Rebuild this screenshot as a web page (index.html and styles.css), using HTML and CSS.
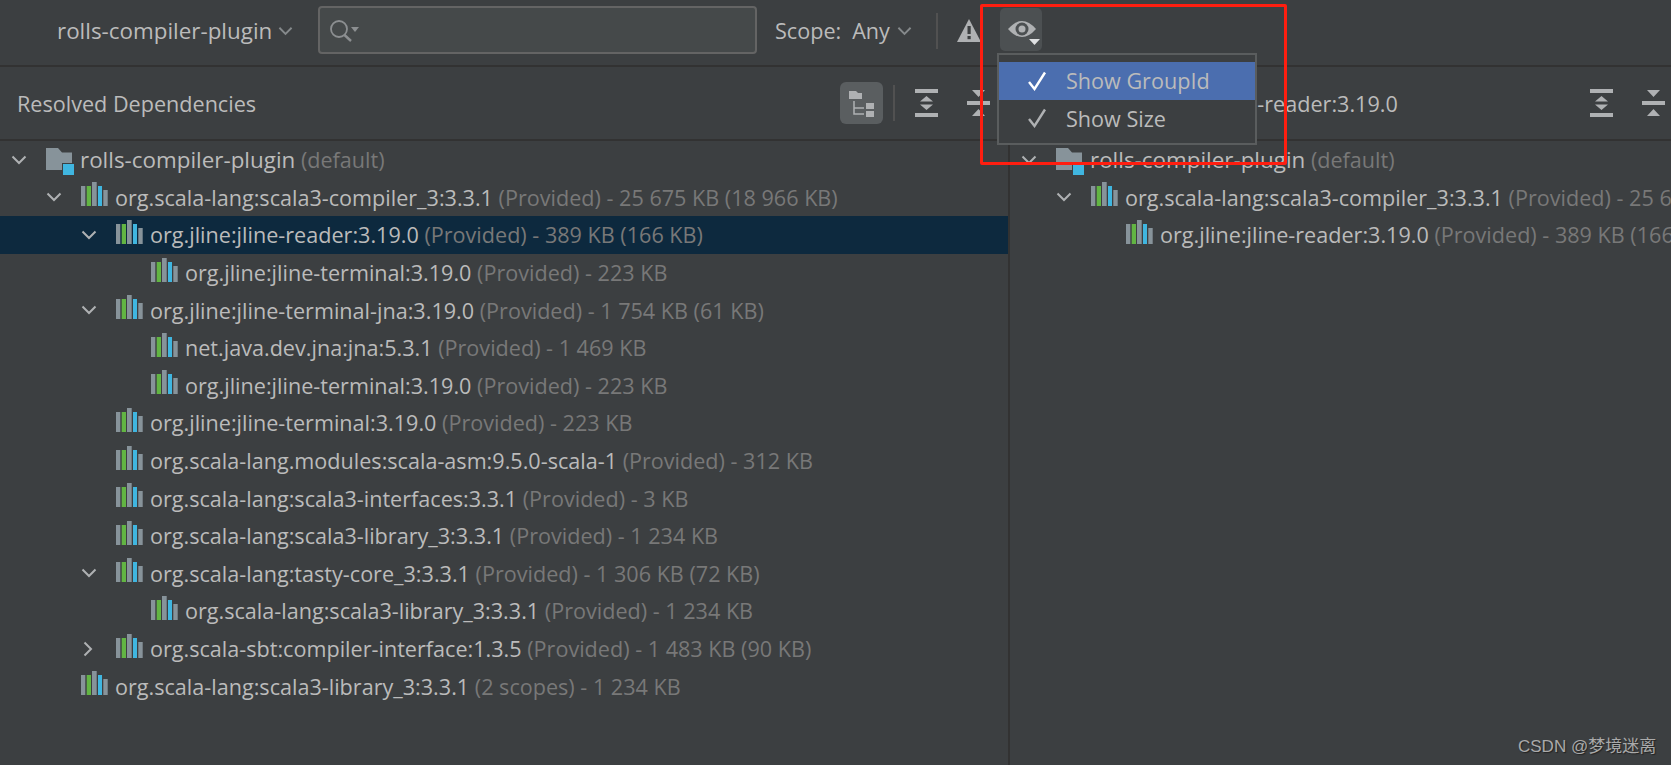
FILE: index.html
```html
<!DOCTYPE html>
<html lang="en">

<head>
    <meta charset="utf-8">
    <title>Resolved Dependencies</title>
    <link rel="stylesheet" href="styles.css">
</head>

<body>
    <!-- icons used more than once -->
    <svg class="defs" width="0" height="0">
        <symbol id="i-down" viewBox="0 0 16 10">
            <path d="M1.5 1.5 L8 8 L14.5 1.5" fill="none" stroke="currentColor" stroke-width="2" />
        </symbol>
        <symbol id="i-right" viewBox="0 0 10 16">
            <path d="M1.5 1.5 L8 8 L1.5 14.5" fill="none" stroke="currentColor" stroke-width="2" />
        </symbol>
        <symbol id="i-lib" viewBox="0 0 27 24">
            <rect x="0" y="4" width="4.3" height="20" fill="#87939a" />
            <rect x="5.700" y="4" width="4.300" height="20" fill="#62b543" />
            <rect x="11" y="0" width="4.700" height="24" fill="#87939a" />
            <rect x="17" y="4" width="4" height="20" fill="#40b6e0" />
            <rect x="22.300" y="8" width="4.400" height="16" fill="#87939a" />
        </symbol>
        <symbol id="i-folder" viewBox="0 0 28 27">
            <path d="M0 0 H12 L16 4.500 H26 V22 H0 Z" fill="#87939a" />
            <rect x="16" y="15" width="12" height="12" fill="#3c3f41" />
            <rect x="17" y="16" width="11" height="11" fill="#40b6e0" />
        </symbol>
        <symbol id="i-expand" viewBox="0 0 23 28">
            <rect x="0" y="0" width="23" height="4" fill="#afb1b3" />
            <rect x="0" y="24" width="23" height="4" fill="#afb1b3" />
            <path d="M11.500 7 L18 12.500 H5 Z M5 15.500 H18 L11.500 21 Z" fill="#afb1b3" />
        </symbol>
        <symbol id="i-collapse" viewBox="0 0 23 28">
            <rect x="0" y="12" width="23" height="4" fill="#afb1b3" />
            <path d="M5 1 H18 L11.500 8 Z M11.500 20 L18 27 H5 Z" fill="#afb1b3" />
        </symbol>
        <symbol id="i-check" viewBox="0 0 20 20">
            <path d="M2 11 L7.500 18 L18 1.500" fill="none" stroke="currentColor" stroke-width="2.400" />
        </symbol>
    </svg>

    <div class="toolbar">
        <span class="tb-module">rolls-compiler-plugin</span>
        <svg class="tb-chevron" width="15" height="10"><use href="#i-down" /></svg>

        <div class="search">
            <svg width="32" height="28" viewBox="0 0 32 28">
                <circle cx="10" cy="13" r="8" fill="none" stroke="#8c8f91" stroke-width="1.800" />
                <path d="M15.500 19 L22 25" stroke="#8c8f91" stroke-width="2.400" />
                <path d="M22 11 H30 L26 16 Z" fill="#8c8f91" />
            </svg>
        </div>

        <span class="scope-label">Scope:</span>
        <span class="scope-value">Any</span>
        <svg class="tb-chevron" width="15" height="10"><use href="#i-down" /></svg>
        <span class="tb-sep"></span>

        <svg class="warn" width="24" height="23" viewBox="0 0 24 23">
            <path d="M12 0 L24 23 H0 Z" fill="#afb1b3" />
            <rect x="10.500" y="7" width="3.200" height="8" fill="#3c3f41" />
            <rect x="10.500" y="17" width="3.200" height="3.200" fill="#3c3f41" />
        </svg>

        <div class="eye-btn">
            <svg width="36" height="36" viewBox="0 0 36 36">
                <path d="M3 15 Q17 -1 31 15 Q17 31 3 15 Z" fill="#afb1b3" />
                <circle cx="17" cy="15" r="6.500" fill="#4c5052" />
                <circle cx="17" cy="15" r="3.500" fill="#afb1b3" />
                <path d="M24 25 H35 L29.500 31 Z" fill="#dfe1e3" />
            </svg>
        </div>
    </div>

    <div class="main">
        <div class="panel panel-left">
            <div class="panel-head">
                <span class="panel-title">Resolved Dependencies</span>
                <div class="toggle-btn">
                    <svg width="30" height="30" viewBox="0 0 30 30">
                        <path d="M2 3 H9 L11 5 H15 V11 H2 Z" fill="#afb1b3" />
                        <path d="M7 13 V26 H17 M7 20 H17" fill="none" stroke="#afb1b3" stroke-width="1.500" />
                        <rect x="19" y="15" width="8" height="6" fill="#afb1b3" />
                        <rect x="19" y="23" width="8" height="6" fill="#afb1b3" />
                    </svg>
                </div>
                <span class="head-sep"></span>
                <svg class="head-expand" width="23" height="28"><use href="#i-expand" /></svg>
                <svg class="head-collapse" width="23" height="28"><use href="#i-collapse" /></svg>
            </div>

            <div class="tree">
                <div class="row lvl-0">
                    <span class="arrow"><svg width="16" height="10"><use href="#i-down" /></svg></span>
                    <svg class="icon" width="28" height="27"><use href="#i-folder" /></svg>
                    <span class="label"><span class="name">rolls-compiler-plugin</span> <span class="info">(default)</span></span>
                </div>
                <div class="row lvl-1">
                    <span class="arrow"><svg width="16" height="10"><use href="#i-down" /></svg></span>
                    <svg class="icon" width="27" height="24"><use href="#i-lib" /></svg>
                    <span class="label"><span class="name">org.scala-lang:scala3-compiler_3:3.3.1</span> <span class="info">(Provided) - 25 675 KB (18 966 KB)</span></span>
                </div>
                <div class="row lvl-2 selected">
                    <span class="arrow"><svg width="16" height="10"><use href="#i-down" /></svg></span>
                    <svg class="icon" width="27" height="24"><use href="#i-lib" /></svg>
                    <span class="label"><span class="name">org.jline:jline-reader:3.19.0</span> <span class="info">(Provided) - 389 KB (166 KB)</span></span>
                </div>
                <div class="row lvl-3">
                    <span class="arrow"></span>
                    <svg class="icon" width="27" height="24"><use href="#i-lib" /></svg>
                    <span class="label"><span class="name">org.jline:jline-terminal:3.19.0</span> <span class="info">(Provided) - 223 KB</span></span>
                </div>
                <div class="row lvl-2">
                    <span class="arrow"><svg width="16" height="10"><use href="#i-down" /></svg></span>
                    <svg class="icon" width="27" height="24"><use href="#i-lib" /></svg>
                    <span class="label"><span class="name">org.jline:jline-terminal-jna:3.19.0</span> <span class="info">(Provided) - 1 754 KB (61 KB)</span></span>
                </div>
                <div class="row lvl-3">
                    <span class="arrow"></span>
                    <svg class="icon" width="27" height="24"><use href="#i-lib" /></svg>
                    <span class="label"><span class="name">net.java.dev.jna:jna:5.3.1</span> <span class="info">(Provided) - 1 469 KB</span></span>
                </div>
                <div class="row lvl-3">
                    <span class="arrow"></span>
                    <svg class="icon" width="27" height="24"><use href="#i-lib" /></svg>
                    <span class="label"><span class="name">org.jline:jline-terminal:3.19.0</span> <span class="info">(Provided) - 223 KB</span></span>
                </div>
                <div class="row lvl-2">
                    <span class="arrow"></span>
                    <svg class="icon" width="27" height="24"><use href="#i-lib" /></svg>
                    <span class="label"><span class="name">org.jline:jline-terminal:3.19.0</span> <span class="info">(Provided) - 223 KB</span></span>
                </div>
                <div class="row lvl-2">
                    <span class="arrow"></span>
                    <svg class="icon" width="27" height="24"><use href="#i-lib" /></svg>
                    <span class="label"><span class="name">org.scala-lang.modules:scala-asm:9.5.0-scala-1</span> <span class="info">(Provided) - 312 KB</span></span>
                </div>
                <div class="row lvl-2">
                    <span class="arrow"></span>
                    <svg class="icon" width="27" height="24"><use href="#i-lib" /></svg>
                    <span class="label"><span class="name">org.scala-lang:scala3-interfaces:3.3.1</span> <span class="info">(Provided) - 3 KB</span></span>
                </div>
                <div class="row lvl-2">
                    <span class="arrow"></span>
                    <svg class="icon" width="27" height="24"><use href="#i-lib" /></svg>
                    <span class="label"><span class="name">org.scala-lang:scala3-library_3:3.3.1</span> <span class="info">(Provided) - 1 234 KB</span></span>
                </div>
                <div class="row lvl-2">
                    <span class="arrow"><svg width="16" height="10"><use href="#i-down" /></svg></span>
                    <svg class="icon" width="27" height="24"><use href="#i-lib" /></svg>
                    <span class="label"><span class="name">org.scala-lang:tasty-core_3:3.3.1</span> <span class="info">(Provided) - 1 306 KB (72 KB)</span></span>
                </div>
                <div class="row lvl-3">
                    <span class="arrow"></span>
                    <svg class="icon" width="27" height="24"><use href="#i-lib" /></svg>
                    <span class="label"><span class="name">org.scala-lang:scala3-library_3:3.3.1</span> <span class="info">(Provided) - 1 234 KB</span></span>
                </div>
                <div class="row lvl-2">
                    <span class="arrow arrow-right"><svg width="10" height="16"><use href="#i-right" /></svg></span>
                    <svg class="icon" width="27" height="24"><use href="#i-lib" /></svg>
                    <span class="label"><span class="name">org.scala-sbt:compiler-interface:1.3.5</span> <span class="info">(Provided) - 1 483 KB (90 KB)</span></span>
                </div>
                <div class="row lvl-1">
                    <span class="arrow"></span>
                    <svg class="icon" width="27" height="24"><use href="#i-lib" /></svg>
                    <span class="label"><span class="name">org.scala-lang:scala3-library_3:3.3.1</span> <span class="info">(2 scopes) - 1 234 KB</span></span>
                </div>
            </div>
        </div>

        <div class="panel panel-right">
            <div class="panel-head">
                <span class="panel-title title-right">org.jline:jline-reader:3.19.0</span>
                <svg class="head-expand" width="23" height="28"><use href="#i-expand" /></svg>
                <svg class="head-collapse" width="23" height="28"><use href="#i-collapse" /></svg>
            </div>

            <div class="tree">
                <div class="row lvl-0">
                    <span class="arrow"><svg width="16" height="10"><use href="#i-down" /></svg></span>
                    <svg class="icon" width="28" height="27"><use href="#i-folder" /></svg>
                    <span class="label"><span class="name">rolls-compiler-plugin</span> <span class="info">(default)</span></span>
                </div>
                <div class="row lvl-1">
                    <span class="arrow"><svg width="16" height="10"><use href="#i-down" /></svg></span>
                    <svg class="icon" width="27" height="24"><use href="#i-lib" /></svg>
                    <span class="label"><span class="name">org.scala-lang:scala3-compiler_3:3.3.1</span> <span class="info">(Provided) - 25 675 KB (18 966 KB)</span></span>
                </div>
                <div class="row lvl-2">
                    <span class="arrow"></span>
                    <svg class="icon" width="27" height="24"><use href="#i-lib" /></svg>
                    <span class="label"><span class="name">org.jline:jline-reader:3.19.0</span> <span class="info">(Provided) - 389 KB (166 KB)</span></span>
                </div>
            </div>
        </div>
    </div>

    <!-- popup of the eye button -->
    <div class="popup">
        <div class="popup-item active">
            <svg width="20" height="20"><use href="#i-check" /></svg>
            <span>Show GroupId</span>
        </div>
        <div class="popup-item">
            <svg width="20" height="20"><use href="#i-check" /></svg>
            <span>Show Size</span>
        </div>
    </div>

    <!-- red mark of the author of the screenshot -->
    <div class="red-mark"></div>

    <div class="watermark">CSDN @梦境迷离</div>
</body>

</html>
```

FILE: styles.css
```css
body {
    margin: 0;
    width: 1671px;
    height: 765px;
    overflow: hidden;
    background-color: #3c3f41;
    color: #bbbbbb;
    font-family: "Open Sans", "Liberation Sans", sans-serif;
    font-size: 21.6px;
}

.defs {
    display: block;
    height: 0;
}

/* Barra de cima */
.toolbar {
    display: flex;
    align-items: center;
    height: 65px;
    padding-left: 57px;
    border-bottom: 2px solid #323232;
}

.tb-module {
    width: 214px;
    font-size: 22.4px;
    white-space: nowrap;
    margin-top: -4px;
}

.scope-label,
.scope-value {
    margin-top: -4px;
}

.tb-chevron {
    margin-left: 7px;
    margin-top: -4px;
    flex: none;
    color: #85898b;
}

.search {
    display: flex;
    align-items: center;
    height: 44px;
    width: 426px;
    margin-left: 25px;
    margin-right: 18px;
    margin-top: -6px;
    padding-left: 9px;
    background-color: #45494a;
    border: 2px solid #646464;
    border-radius: 4px;
}

.scope-value {
    margin-left: 11px;
}

.tb-sep {
    width: 2px;
    height: 36px;
    margin-left: 24px;
    margin-top: -4px;
    background-color: #515151;
}

.warn {
    margin-left: 19px;
    margin-top: -4px;
}

.eye-btn {
    width: 42px;
    height: 43px;
    margin-left: 19px;
    margin-top: -6px;
    padding: 6px 0 0 5px;
    box-sizing: border-box;
    background-color: #4c5052;
    border-radius: 5px;
}

/* Os dois paineis */
.main {
    display: flex;
    height: 698px;
}

.panel {
    overflow: hidden;
}

.panel-left {
    width: 1008px;
    flex: none;
    border-right: 2px solid #323232;
}

.panel-right {
    flex: 1;
}

.panel-head {
    display: flex;
    align-items: center;
    height: 72px;
    border-bottom: 2px solid #323232;
}

.panel-title {
    margin-left: 17px;
    flex: 1;
    white-space: nowrap;
}

.title-right {
    margin-left: 119px;
}

.toggle-btn {
    display: flex;
    align-items: center;
    justify-content: center;
    width: 43px;
    height: 42px;
    background-color: #5a5e60;
    border-radius: 6px;
}

.head-sep {
    width: 2px;
    height: 36px;
    margin-left: 10px;
    background-color: #515151;
}

.head-expand {
    margin-left: 20px;
    flex: none;
}

.head-collapse {
    margin-left: 29px;
    margin-right: 18px;
    flex: none;
}

.panel-right .head-collapse {
    margin-right: 6px;
}

/* Arvore de dependencias */
.row {
    display: flex;
    align-items: center;
    height: 37.6px;
    white-space: pre;
}

.row.selected {
    background-color: #0d293e;
}

.lvl-0 { padding-left: 11px; }
.lvl-1 { padding-left: 46px; }
.lvl-2 { padding-left: 81px; }
.lvl-3 { padding-left: 116px; }

.arrow {
    display: flex;
    align-items: center;
    width: 35px;
    flex: none;
    color: #afb1b3;
}

.arrow-right svg {
    margin-left: 2px;
}

.icon {
    width: 27px;
    margin-right: 7px;
    margin-bottom: 6px;
    flex: none;
}

.lvl-0 .icon {
    width: 28px;
    margin-right: 6px;
    margin-bottom: 0;
    margin-top: 3px;
}

.lvl-0 .name {
    font-size: 22.4px;
}

.info {
    color: #787878;
}

/* Menu do olho */
.popup {
    position: absolute;
    left: 997px;
    top: 53px;
    width: 260px;
    height: 92px;
    padding-top: 7px;
    box-sizing: border-box;
    background-color: #3c3f41;
    border: 2px solid #5a5d5e;
}

.popup-item {
    display: flex;
    align-items: center;
    height: 37.5px;
    padding-left: 28px;
}

.popup-item svg {
    margin-right: 19px;
    color: #afb1b3;
}

.popup-item.active {
    background-color: #4b6eaf;
}

.popup-item.active svg {
    color: #ffffff;
}

.red-mark {
    position: absolute;
    left: 980px;
    top: 4px;
    width: 307px;
    height: 161px;
    box-sizing: border-box;
    border: 3px solid #ff1e10;
    border-radius: 2px;
}

.watermark {
    position: absolute;
    left: 1518px;
    top: 732px;
    font-family: "Liberation Sans", "Noto Sans CJK SC", sans-serif;
    font-size: 17px;
    color: #aaaaaa;
    text-shadow: 1px 1px 1px #222222;
}
```
